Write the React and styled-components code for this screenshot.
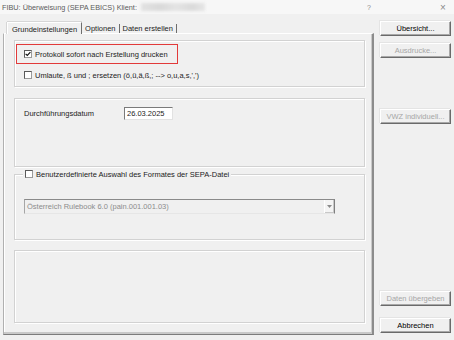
import React from "react";
import styled, { createGlobalStyle } from "styled-components";

const GlobalStyle = createGlobalStyle`
  * { box-sizing: border-box; }
  html, body { margin: 0; padding: 0; background: #f0f0f0; }
  body { font-family: "Liberation Sans", Arial, sans-serif; }
`;

const Window = styled.div`
  width: 454px;
  height: 340px;
  display: flex;
  flex-direction: column;
  background: #f0f0f0;
  color: #1c1c1c;
  font-size: 7.5px;
  overflow: hidden;
`;

const TitleBar = styled.div`
  height: 14px;
  display: flex;
  align-items: center;
  padding-left: 2px;
  background: #f7f7f7;
  color: #5c5c5c;
  font-size: 7.3px;
`;

const TitleText = styled.span`
  white-space: nowrap;
`;

// client name is blurred out in the screenshot
const Blurred = styled.span`
  margin-left: 4px;
  width: 64px;
  height: 8px;
  background: linear-gradient(90deg, #e2e2e2, #d9d9d9 30%, #e4e4e4 55%, #dadada 80%, #e6e6e6);
  filter: blur(1.4px);
`;

const TitleButton = styled.span`
  width: ${(p) => p.$w}px;
  text-align: center;
  color: #8a8a8a;
  font-size: ${(p) => p.$size}px;
  margin-left: ${(p) => p.$ml || 0}px;
`;

const Main = styled.div`
  flex: 1;
  display: flex;
  padding: 8px 0 5px 3px;
`;

const LeftColumn = styled.div`
  width: 371px;
  display: flex;
  flex-direction: column;
`;

const TabStrip = styled.div`
  height: 11px;
  display: flex;
  align-items: flex-end;
  padding-left: 4px;
  position: relative;
  z-index: 1;
`;

const Tab = styled.div`
  height: ${(p) => (p.$active ? 12 : 9)}px;
  margin-bottom: ${(p) => (p.$active ? -1 : 0)}px;
  padding: 0 ${(p) => (p.$active ? 4 : 3)}px;
  display: flex;
  align-items: center;
  white-space: nowrap;
  background: #f0f0f0;
  border-right: 1px solid #6e6e6e;
  border-left: ${(p) => (p.$active ? "1px solid #ffffff" : "none")};
  border-top: ${(p) => (p.$active ? "1px solid #ffffff" : "none")};
  box-shadow: ${(p) => (p.$active ? "-1px 0 0 #d6d6d6, 0 -1px 0 #d6d6d6" : "none")};
  padding-top: ${(p) => (p.$active ? 1 : 0)}px;
`;

const Panel = styled.div`
  flex: 1;
  display: flex;
  flex-direction: column;
  padding: 6px 7px 0 10px;
  border: 1px solid #b0b0b0;
  border-top-color: #ffffff;
  border-right: 2px solid #8c8c8c;
  border-bottom: 1px solid #7c7c7c;
  box-shadow: inset -1px -2px 0 #c9c9c9, inset 1px 0 0 #ffffff;
`;

const GroupBox = styled.fieldset`
  margin: ${(p) => p.$mt || 0}px 0 0 0;
  height: ${(p) => p.$h}px;
  min-inline-size: 0;
  padding: ${(p) => p.$pad || "0"};
  border: 1px solid #d2d2d2;
  box-shadow: inset 1px 1px 0 #ffffff, 1px 1px 0 #ffffff;
  display: flex;
  flex-direction: column;
  align-items: flex-start;
`;

const Legend = styled.legend`
  padding: 0 2px;
  height: 10px;
  display: flex;
  align-items: center;
  gap: 3px;
  background: #f0f0f0;
`;

const Highlight = styled.div`
  width: 162px;
  height: 20px;
  margin: 3px 0 0 1px;
  padding-left: 7px;
  display: flex;
  align-items: center;
  gap: 3px;
  border: 1.5px solid #e23a3a;
`;

const OptionRow = styled.div`
  height: 12px;
  margin: ${(p) => p.$m || "0"};
  display: flex;
  align-items: center;
  gap: 3px;
  white-space: nowrap;
`;

const Box = styled.span`
  width: 8px;
  height: 8px;
  flex: none;
  display: inline-flex;
  align-items: center;
  justify-content: center;
  background: #ffffff;
  border: 1px solid #5a5a5a;
  border-right-color: #9a9a9a;
  border-bottom-color: #9a9a9a;
`;

const Label = styled.span`
  white-space: nowrap;
`;

const FieldRow = styled.div`
  margin: 8px 0 0 9px;
  display: flex;
  align-items: center;
`;

const FieldLabel = styled.span`
  width: 100px;
`;

const DateInput = styled.div`
  width: 49px;
  height: 13px;
  padding-left: 2px;
  display: flex;
  align-items: center;
  background: #ffffff;
  border: 1px solid #e2e2e2;
  border-top-color: #7a7a7a;
  border-left-color: #7a7a7a;
`;

const Select = styled.div`
  width: 311px;
  height: 15px;
  margin-left: 1px;
  display: flex;
  align-items: center;
  justify-content: space-between;
  padding-left: 2px;
  background: #f0f0f0;
  color: #8c8c8c;
  border: 1px solid #a6a6a6;
  border-top-color: #8a8a8a;
  border-right-color: #7f7f7f;
  border-bottom-color: #e6e6e6;
`;

const SelectArrow = styled.span`
  width: 10px;
  height: 13px;
  display: flex;
  align-items: center;
  justify-content: center;
  background: #f4f4f4;
  border-left: 1px solid #ffffff;
  box-shadow: inset -1px -1px 0 #c8c8c8;
`;

const RightColumn = styled.div`
  width: 71px;
  margin: -1px 0 0 6px;
  padding-bottom: 2px;
  display: flex;
  flex-direction: column;
  gap: 7px;
`;

const Button = styled.div`
  height: 15px;
  margin-top: ${(p) => p.$mt || 0};
  flex: none;
  display: flex;
  align-items: center;
  justify-content: center;
  white-space: nowrap;
  color: ${(p) => (p.disabled ? "#a6a6a6" : "#000000")};
  background: #f0f0f0;
  border: 1px solid #ffffff;
  border-right-color: #6a6a6a;
  border-bottom-color: #6a6a6a;
  box-shadow: inset -1px -1px 0 #a8a8a8, -1px -1px 0 #e4e4e4;
`;

const Check = ({ checked }) => (
  <Box>
    {checked && (
      <svg width="6" height="6" viewBox="0 0 6 6">
        <path d="M0.6 2.8 L2.3 4.5 L5.4 1.2" fill="none" stroke="#111" strokeWidth="1.2" />
      </svg>
    )}
  </Box>
);

export default function App() {
  return (
    <>
      <GlobalStyle />
      <Window>
        <TitleBar>
          <TitleText>FIBU: Überweisung (SEPA EBICS) Klient:</TitleText>
          <Blurred />
          <TitleButton $w={12} $size={7} $ml={158}>?</TitleButton>
          <TitleButton $w={12} $size={10} $ml={62}>×</TitleButton>
        </TitleBar>
        <Main>
          <LeftColumn>
            <TabStrip>
              <Tab $active>Grundeinstellungen</Tab>
              <Tab>Optionen</Tab>
              <Tab>Daten erstellen</Tab>
            </TabStrip>
            <Panel>
              <GroupBox $h={47}>
                <Highlight>
                  <Check checked />
                  <Label>Protokoll sofort nach Erstellung drucken</Label>
                </Highlight>
                <OptionRow $m="5px 0 0 9px">
                  <Check />
                  <Label>Umlaute, ß und ; ersetzen (ö,ü,ä,ß,; --&gt; o,u,a,s,',')</Label>
                </OptionRow>
              </GroupBox>
              <GroupBox $h={69} $mt={11}>
                <FieldRow>
                  <FieldLabel>Durchführungsdatum</FieldLabel>
                  <DateInput>26.03.2025</DateInput>
                </FieldRow>
              </GroupBox>
              <GroupBox $h={71} $mt={2} $pad="20px 0 0 8px">
                <Legend>
                  <Check />
                  <Label>Benutzerdefinierte Auswahl des Formates der SEPA-Datei</Label>
                </Legend>
                <Select>
                  <span>Österreich Rulebook 6.0 (pain.001.001.03)</span>
                  <SelectArrow>
                    <svg width="5" height="3" viewBox="0 0 5 3">
                      <path d="M0 0 H5 L2.5 3 Z" fill="#8a8a8a" />
                    </svg>
                  </SelectArrow>
                </Select>
              </GroupBox>
              <GroupBox $h={73} $mt={10} />
            </Panel>
          </LeftColumn>
          <RightColumn>
            <Button>Übersicht...</Button>
            <Button disabled>Ausdrucke...</Button>
            <Button disabled $mt="44px">VWZ individuell...</Button>
            <Button disabled $mt="auto">Daten übergeben</Button>
            <Button $mt="5px">Abbrechen</Button>
          </RightColumn>
        </Main>
      </Window>
    </>
  );
}
